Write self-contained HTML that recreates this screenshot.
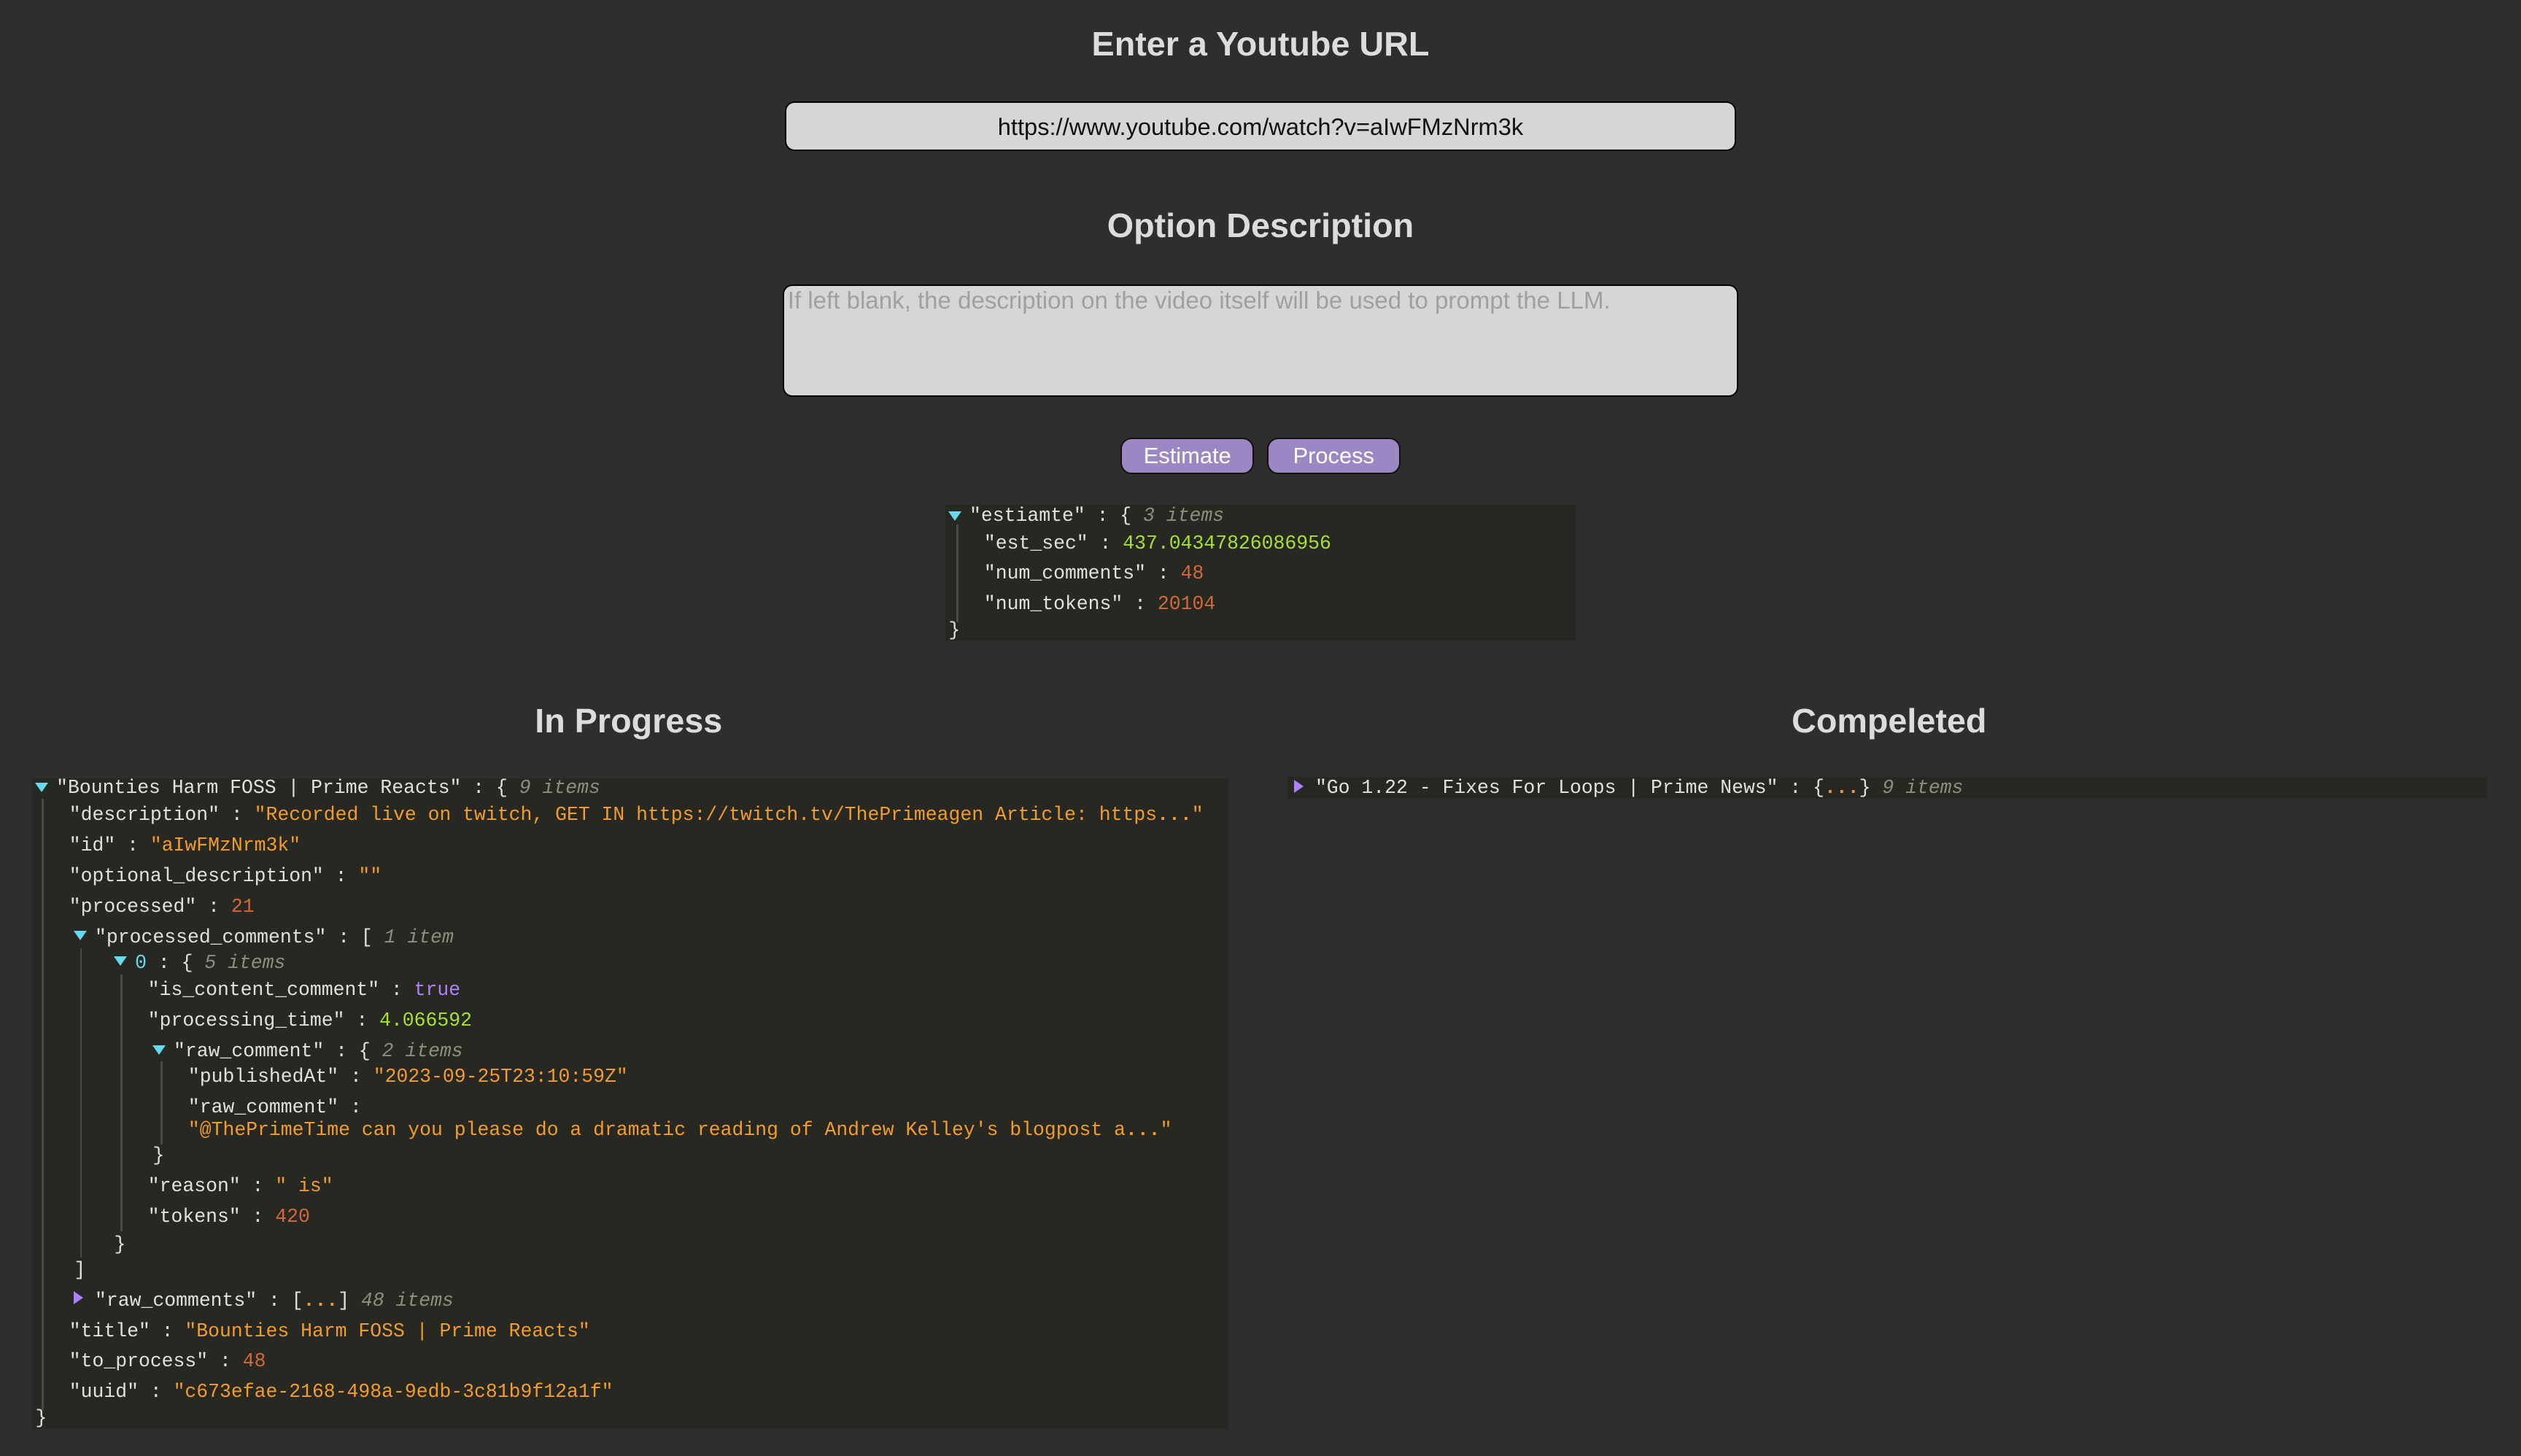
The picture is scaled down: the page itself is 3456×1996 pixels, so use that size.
<!DOCTYPE html>
<html><head><meta charset="utf-8"><style>
html{zoom:2.20408;}
body{margin:0;background:#2e2e2e;width:1568px;height:905.6px;overflow:hidden;position:relative;font-family:"Liberation Sans",sans-serif;}
.h{position:absolute;color:#dcdcdc;font-weight:bold;font-size:21.2px;text-align:center;width:600px;margin-left:-300px;}
.box{position:absolute;background:#d6d6d6;border:1px solid #000;box-sizing:border-box;border-radius:6px;}
.btn{position:absolute;top:272px;height:23px;background:#9b87c4;border:1px solid #111;box-sizing:border-box;border-radius:7px;color:#fff;font-size:14px;text-align:center;line-height:21px;}
.j{position:absolute;background:#272822;}
.l{position:absolute;white-space:pre;font-family:"Liberation Mono",monospace;font-size:12px;color:#e0e0e0;line-height:14px;margin-top:1px;}
.s{color:#f39c2c}.n{color:#d2693a}.f{color:#a6e22e}.b{color:#ae81ff}.c{color:#8f8d7e;font-style:italic}.k{color:#66d9ef}
.t{position:absolute;width:0;height:0;border-left:4.5px solid transparent;border-right:4.5px solid transparent;border-top:6px solid #66d9ef;}
.tr{position:absolute;width:0;height:0;border-top:4.5px solid transparent;border-bottom:4.5px solid transparent;border-left:6px solid #ae81ff;}
.g{position:absolute;width:1px;background:#4a4a44;}
.d{color:#f39c2c;font-weight:bold}
</style></head><body>
<div class="h" style="left:784px;top:15px">Enter a Youtube URL</div>
<div class="box" style="left:488px;top:63px;width:592px;height:31px;font-size:14.8px;text-align:center;line-height:30px;color:#111">https://www.youtube.com/watch?v=aIwFMzNrm3k</div>
<div class="h" style="left:784px;top:128px">Option Description</div>
<div class="box" style="left:487px;top:177px;width:594px;height:70px;font-size:15px;color:#a0a0a0;padding:1px 2px">If left blank, the description on the video itself will be used to prompt the LLM.</div>
<div class="btn" style="left:697px;width:83px">Estimate</div>
<div class="btn" style="left:788px;width:83px">Process</div>

<div class="j" style="left:588px;top:314px;width:392px;height:85px"></div>
<div class="t" style="left:590px;top:318px"></div>
<div class="g" style="left:595px;top:326px;height:61px"></div>
<div class="l" style="left:603px;top:313px">"estiamte" : { <span class="c">3 items</span></div>
<div class="l" style="left:612px;top:330px">"est_sec" : <span class="f">437.04347826086956</span></div>
<div class="l" style="left:612px;top:349px">"num_comments" : <span class="n">48</span></div>
<div class="l" style="left:612px;top:368px">"num_tokens" : <span class="n">20104</span></div>
<div class="l" style="left:590px;top:384px">}</div>

<div class="h" style="left:391px;top:436px">In Progress</div>
<div class="h" style="left:1175px;top:436px">Compeleted</div>

<div class="j" style="left:20px;top:484px;width:744px;height:405px"></div>
<div class="g" style="left:26px;top:497px;height:380px"></div>
<div class="g" style="left:50px;top:590px;height:192px"></div>
<div class="g" style="left:75px;top:606px;height:160px"></div>
<div class="g" style="left:100px;top:660px;height:52px"></div>
<div class="t" style="left:22px;top:487px"></div>
<div class="l" style="left:35px;top:482px">"Bounties Harm FOSS | Prime Reacts" : { <span class="c">9 items</span></div>
<div class="l" style="left:43px;top:499px">"description" : <span class="s">"Recorded live on twitch, GET IN https://twitch.tv/ThePrimeagen Article: https<span class="d">...</span>"</span></div>
<div class="l" style="left:43px;top:518px">"id" : <span class="s">"aIwFMzNrm3k"</span></div>
<div class="l" style="left:43px;top:537px">"optional_description" : <span class="s">""</span></div>
<div class="l" style="left:43px;top:556px">"processed" : <span class="n">21</span></div>
<div class="t" style="left:46px;top:579px"></div>
<div class="l" style="left:59px;top:575px">"processed_comments" : [ <span class="c">1 item</span></div>
<div class="t" style="left:71px;top:595px"></div>
<div class="l" style="left:84px;top:591px"><span class="k">0</span> : { <span class="c">5 items</span></div>
<div class="l" style="left:92px;top:608px">"is_content_comment" : <span class="b">true</span></div>
<div class="l" style="left:92px;top:627px">"processing_time" : <span class="f">4.066592</span></div>
<div class="t" style="left:95px;top:650px"></div>
<div class="l" style="left:108px;top:646px">"raw_comment" : { <span class="c">2 items</span></div>
<div class="l" style="left:117px;top:662px">"publishedAt" : <span class="s">"2023-09-25T23:10:59Z"</span></div>
<div class="l" style="left:117px;top:681px">"raw_comment" :</div>
<div class="l" style="left:117px;top:695px"><span class="s">"@ThePrimeTime can you please do a dramatic reading of Andrew Kelley's blogpost a<span class="d">...</span>"</span></div>
<div class="l" style="left:95px;top:711px">}</div>
<div class="l" style="left:92px;top:730px">"reason" : <span class="s">" is"</span></div>
<div class="l" style="left:92px;top:749px">"tokens" : <span class="n">420</span></div>
<div class="l" style="left:71px;top:766px">}</div>
<div class="l" style="left:46px;top:782px">]</div>
<div class="tr" style="left:46px;top:803px"></div>
<div class="l" style="left:59px;top:801px">"raw_comments" : [<span class="d">...</span>] <span class="c">48 items</span></div>
<div class="l" style="left:43px;top:820px">"title" : <span class="s">"Bounties Harm FOSS | Prime Reacts"</span></div>
<div class="l" style="left:43px;top:839px">"to_process" : <span class="n">48</span></div>
<div class="l" style="left:43px;top:858px">"uuid" : <span class="s">"c673efae-2168-498a-9edb-3c81b9f12a1f"</span></div>
<div class="l" style="left:22px;top:874px">}</div>

<div class="j" style="left:801px;top:483px;width:746px;height:14px"></div>
<div class="tr" style="left:805px;top:485px"></div>
<div class="l" style="left:818px;top:482px">"Go 1.22 - Fixes For Loops | Prime News" : {<span class="d">...</span>} <span class="c">9 items</span></div>
</body></html>
